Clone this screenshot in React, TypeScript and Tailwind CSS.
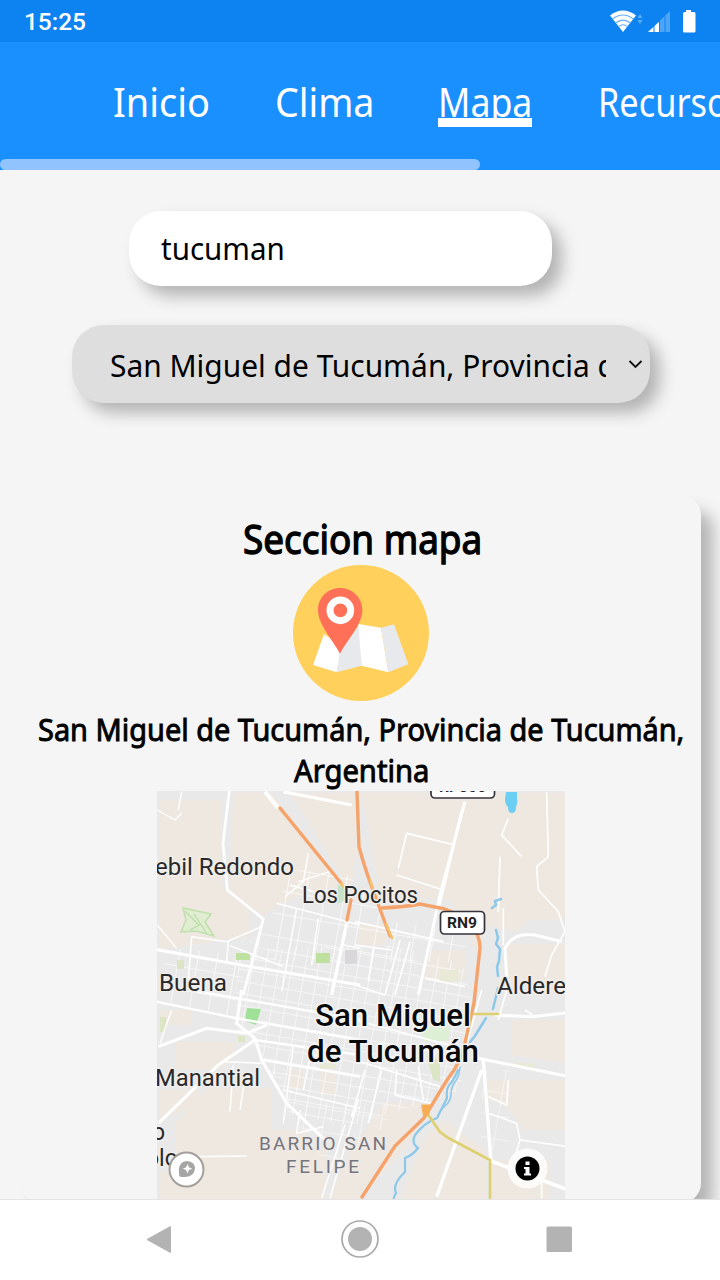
import { useLayoutEffect, useRef, useState } from "react";

function FitText({ text, width, className = "" }: { text: string; width: number; className?: string }) {
  const ref = useRef<HTMLSpanElement>(null);
  const [scale, setScale] = useState(1);
  useLayoutEffect(() => {
    if (ref.current) setScale(width / ref.current.offsetWidth);
  }, [text, width]);
  return (
    <span className={`block whitespace-nowrap ${className}`} style={{ width }}>
      <span ref={ref} className="inline-block origin-left" style={{ transform: `scaleX(${scale})` }}>
        {text}
      </span>
    </span>
  );
}

function StatusBar() {
  return (
    <div className="flex h-[42px] shrink-0 items-center justify-between bg-[#0c83f1] pl-[24px] pr-[24px] text-white">
      <FitText text="15:25" width={62} className="pt-px font-['Roboto',sans-serif] text-[24px] leading-[42px] font-medium" />
      <svg width="88" height="30" viewBox="608 5 88 30" className="-mt-px">
        <path d="M610 14.5 Q623 4.5 636 14.5 L623 31Z" fill="#fff" />
        <path d="M612.5 18 Q623 10 633.5 18 M615.5 22 Q623 16.3 630.5 22 M618.5 25.6 Q623 22 627.5 25.6" fill="none" stroke="#62aef7" strokeWidth="1.1" />
        <path d="M640 13l2.5 4h-5zM640 23l2.5-4h-5z" fill="#5aaef8" />
        <path d="M670 10V31H648Z" fill="#4ca5f6" />
        <path d="M659 21V31H648Z" fill="#fff" />
        <path d="M654 14v18M659.5 10v22M665 10v22" stroke="#0c83f1" strokeWidth="1" />
        <path d="M686 9h5v2h3q1.500 0 1.500 1.500V30q0 1.500-1.500 1.500H684.500Q683 31.500 683 30V12.500Q683 11 684.500 11H686Z" fill="#fff" />
      </svg>
    </div>
  );
}

function Header() {
  return (
    <header className="flex h-[128px] shrink-0 flex-col justify-between overflow-hidden bg-[#1a90ff]">
      <nav className="flex w-[800px] pt-[32px] pl-[113px] text-[39.5px] leading-[57px] text-white">
        <FitText text="Inicio" width={97} className="mr-[65px]" />
        <FitText text="Clima" width={99} className="mr-[64px]" />
        <div className="mr-[66px] h-[53px] overflow-hidden border-b-[9px] border-white">
          <FitText text="Mapa" width={94} />
        </div>
        <FitText text="Recursos" width={146} />
      </nav>
      <div className="h-[11px] w-[480px] rounded-md bg-[#91c3ff]" />
    </header>
  );
}

function MapBadge() {
  return (
    <svg className="h-[136px] w-[136px]" viewBox="219 225 408 408">
      <circle cx="423" cy="429" r="204" fill="#ffd05b" />
      <path d="M312 432L279 525L350 547L366 470Z" fill="#fff" />
      <path d="M360 480L350 547L425 527L420 402Z" fill="#e8e9ec" />
      <path d="M415 402L483 413L505 547L425 527Z" fill="#fff" />
      <path d="M483 413L522 403L565 523L505 547Z" fill="#e8e9ec" />
      <path d="M360 294c-37 0-66 29-66 66 0 43 44 89 66 131 22-42 67-88 67-131 0-37-30-66-67-66Z" fill="#ff7058" />
      <circle cx="361" cy="361" r="31" fill="none" stroke="#fff" strokeWidth="21" />
    </svg>
  );
}

function CityMap() {
  return (
    <svg className="h-[408px] w-[408px] font-['Roboto',sans-serif]" viewBox="157 791 408 408">
      <defs>
        <pattern id="grid" width="13" height="12" patternUnits="userSpaceOnUse" patternTransform="rotate(10)">
          <path d="M0 0H13M0 0V12" stroke="#fafafb" strokeWidth="1.5" />
        </pattern>
        <pattern id="gridWide" width="19" height="23" patternUnits="userSpaceOnUse" patternTransform="rotate(10)">
          <path d="M0 0H19M0 0V23" stroke="#fbfbfb" strokeWidth="1.7" />
        </pattern>
      </defs>
      <rect x="157" y="791" width="408" height="408" fill="#e9e9ea" />
      <g fill="#efe8e0">
        <path d="M160 800H222V884L250 905V936L160 950Z" />
        <path d="M233 793H272L345 885L300 895L262 915L230 890Z" />
        <path d="M290 793H356L358 850L350 890Z" />
        <path d="M362 793H565V920H530L515 932L490 925L475 950L450 900L380 895Z" />
        <path d="M507 944H565V982H507Z" />
        <path d="M360 925H385V945H358ZM430 950H465V980H425Z" />
        <path d="M160 1010H192V1025H160ZM176 1042H235V1055L222 1069H176ZM160 1090H200V1105L160 1120Z" />
        <path d="M176 1122L207 1088H272V1199H160V1172H176Z" />
        <path d="M288 1070H304V1088H288ZM320 1070H336V1095H320ZM272 1130H305V1150H325V1199H272Z" />
        <path d="M384 1103H420V1130L360 1199H330L345 1160Z" />
        <path d="M512 1020H565V1063L512 1055ZM512 1080H565V1130H525L500 1100H487V1080ZM425 1135L445 1120L485 1150V1199H400ZM492 1160H550V1199H492Z" />
      </g>
      <path d="M240 949L390 946L462 962L474 1010L460 1090L418 1105L350 1125L290 1115L260 1050L233 1025Z" fill="url(#grid)" />
      <path d="M292 870L345 872L400 925L468 930L462 962L240 960L270 920ZM165 948L245 955L240 1020L160 1000Z" fill="url(#gridWide)" />
      <path d="M265 1055L300 1100L400 1105L380 1130L330 1170L290 1115ZM483 1070H510V1150H480Z" fill="url(#gridWide)" opacity=".7" />
      <g>
        <path d="M183 908L211 914L205 922L214 936L196 931L181 932L186 920Z" fill="#e1edd0" stroke="#bfdfac" strokeWidth="1.500" />
        <path d="M185 911L199 925L190 930M194 914L207 934" fill="none" stroke="#b7dca6" strokeWidth="1.200" />
        <path d="M236 953h14v7h-14zM316 953h14v10h-14z" fill="#bfe1a0" />
        <path d="M247 1008L261 1009L256 1025L245 1021Z" fill="#9fe196" />
        <path d="M422 1026L450 1027L448 1041H423Z" fill="#ddefd4" />
        <path d="M426 1055L440 1060V1082L433 1079ZM238 1036h7v6h-7zM160 1017h6v15h-6zM177 960h7v9h-7z" fill="#dce6c5" />
        <path d="M320 1063h16v6h-16zM515 1063h20v5h-20zM440 970h18v12h-18z" fill="#e8ead5" />
        <path d="M345 950h12v14h-12z" fill="#d9d7d9" />
      </g>
      <g transform="translate(150 785) scale(.3333)" fill="none" stroke="#fff" strokeWidth="8">
        <path d="M238 18L219 175L232 315L340 402L280 630" />
        <path d="M345 20L385 70" strokeWidth="12" />
        <path d="M400 20L605 60M0 490L300 545L630 600" strokeWidth="9" />
        <path d="M592 405L545 630" strokeWidth="10" />
        <path d="M95 20L85 75M125 455L230 470L335 425M125 455L115 590M235 470L230 530M240 482L400 545M475 205L460 290L405 335M380 355L630 420M445 290L540 260M440 370L395 620M505 400L485 540M420 300L560 340M580 480L630 490" strokeWidth="4.500" />
        <path d="M22 75L75 105L95 85M22 420L80 490" strokeWidth="4" />
      </g>
      <g transform="translate(355 785) scale(.3333)" fill="none" stroke="#fff" strokeWidth="9">
        <path d="M330 50L255 330L190 630M320 80L250 370" />
        <path d="M575 22L580 215L545 245L550 315L610 380L630 440L590 510L570 575M130 250L155 145L300 180M125 270L265 315M0 410L265 470M0 480L110 495M55 490L40 590M135 465L90 630M165 470L120 630M0 600L90 630M210 580L330 605M460 100L440 150L500 215M435 215L430 380M445 370L445 480" strokeWidth="5" />
        <path d="M455 575L450 490Q475 440 540 450L620 470" />
      </g>
      <g transform="translate(150 990) scale(.3333)" fill="none" stroke="#fff" strokeWidth="9">
        <path d="M25 170L170 115L290 130L350 105M25 400L205 225L315 150" />
        <path d="M275 0L260 100L315 145L335 210L410 340L530 455" />
        <path d="M20 35L260 85L630 150M120 0L350 40L630 90M315 150L630 195M340 210L630 260" strokeWidth="7" />
        <path d="M400 300L630 355M225 215L335 220M250 225L240 365M285 260L270 360M430 170L400 400M480 200L460 300M110 500L290 498M625 330L540 625M585 405L515 625M450 360L440 430L520 410M65 60L30 160" strokeWidth="4.500" />
      </g>
      <g transform="translate(355 990) scale(.3333)" fill="none" stroke="#fff" strokeWidth="9">
        <path d="M420 75L530 80L640 68M370 205L645 260" />
        <path d="M380 240L245 620M385 210L408 515" strokeWidth="10" />
        <path d="M400 510L640 600" strokeWidth="11" />
        <path d="M0 210L255 290M30 240L-10 380M80 240L40 400M125 240L120 315L230 340M190 230L205 330M400 320L455 345L460 270M400 370L485 400L495 450L640 470M540 80L510 60M455 0L430 90M0 90L300 170M560 560L560 625M495 450L480 500M380 0L330 180" strokeWidth="5" />
      </g>
      <g fill="none" stroke="#8dc8e8" strokeLinecap="round">
        <path d="M506 792h11v7q1 4-1 8 0 6-4 6t-4-6q-3-3-3-8Z" fill="#6dcef3" stroke="none" />
        <path d="M492 908l4-3-1-4 6-2M496 930l2 8-2 6 4 5-1 12-2 6 1 9M498 988L493 1009M486 1018L475 1036L470 1042" strokeWidth="2.500" />
        <path d="M458 1070q-4 10-8 14t-3 14q-5 10-10 20q-13 5-22 17q-4 8 3 13q-5 7-13 10q0 8 0 14q-13 12-9 21q-3 5-2 7" strokeWidth="2.200" />
        <path d="M460 1067q-1 10-5 15t-4 12-6 12-7 11" strokeWidth="1.600" />
      </g>
      <g fill="none" strokeLinecap="round" strokeWidth="3.400">
        <path d="M280 808L341 883M351 900L347 920M357 792L359 847Q366 872 374 893L390 936M382 908Q405 907 420 904L445 909Q480 922 480 948L474 1003L466 1038Q463 1060 447 1080L424 1118L395 1146L362 1197" stroke="#f5a36b" />
        <path d="M370 880L373 890M386 924L392 938M341 883L344 888" stroke="#f5c069" strokeWidth="2.500" />
        <path d="M474 1014H498M427 1113L440 1132Q447 1138 456 1142L490 1160V1199" stroke="#ded06f" strokeWidth="2.600" />
        <path d="M422 1105h8l-1 9-5 3Z" fill="#f8ad50" stroke="#f8ad50" strokeWidth="1" />
      </g>
      <path d="M338 884L346 890V900L337 904Z" fill="#b4dfb9" opacity=".7" />
      <g fill="#292929" stroke="#f1eeeb" strokeWidth="3" paintOrder="stroke" strokeLinejoin="round" fontSize="23.500">
        <text x="155" y="875" textLength="139" lengthAdjust="spacingAndGlyphs">ebil Redondo</text>
        <text x="302" y="903" textLength="116" lengthAdjust="spacingAndGlyphs">Los Pocitos</text>
        <text x="159" y="990.500" textLength="68" lengthAdjust="spacingAndGlyphs">Buena</text>
        <text x="497" y="993.500" textLength="69" lengthAdjust="spacingAndGlyphs">Aldere</text>
        <text x="155" y="1085.500" textLength="105" lengthAdjust="spacingAndGlyphs">Manantial</text>
        <text x="152" y="1140" fontSize="23">o</text>
        <text x="146" y="1166" fontSize="23">olo</text>
      </g>
      <g fill="#080808" stroke="#f4f4f4" strokeWidth="3" paintOrder="stroke" strokeLinejoin="round" fontSize="31" fontWeight="500">
        <text x="315" y="1025.500" textLength="156" lengthAdjust="spacingAndGlyphs">San Miguel</text>
        <text x="307" y="1061.500" textLength="172" lengthAdjust="spacingAndGlyphs">de Tucumán</text>
      </g>
      <g fill="#74747d" stroke="#efeae6" strokeWidth="2" paintOrder="stroke" fontSize="19">
        <text x="259" y="1150" textLength="127">BARRIO SAN</text>
        <text x="286" y="1172.500" textLength="73">FELIPE</text>
      </g>
      <g fill="#fff" stroke="#33333b" strokeWidth="1.700">
        <rect x="440.500" y="911.500" width="44" height="22.500" rx="4" />
        <rect x="431" y="775" width="63.500" height="23" rx="4" />
      </g>
      <text x="447" y="928" fontSize="15.500" fontWeight="700" fill="#222" textLength="30" lengthAdjust="spacingAndGlyphs">RN9</text>
      <text x="439" y="792" fontSize="15.500" fontWeight="700" fill="#222" textLength="47" lengthAdjust="spacingAndGlyphs">RP306</text>
      <circle cx="186.500" cy="1169.500" r="17" fill="#fff" stroke="#a3a09b" strokeWidth="2" />
      <path d="M179.500 1176.500Q176.500 1162 187 1161Q195 1161.500 195 1169Q193 1179 179.500 1176.500Z" fill="#a5a5a3" />
      <path d="M187.500 1164l1.400 3.300 3.300 1.400-3.300 1.400-1.400 3.300-1.400-3.300-3.300-1.400 3.300-1.400Z" fill="#fff" />
      <circle cx="527.500" cy="1168.500" r="20" fill="#fff" fillOpacity=".8" />
      <circle cx="527.500" cy="1168.500" r="12" fill="#000" />
      <path d="M525.500 1161.500h4v3.500h-4zM524 1167h5.500v6.500h1.500v2h-7v-2h1.500v-4.500h-1.500Z" fill="#fff" />
    </svg>
  );
}

function MapSection() {
  return (
    <section className="mt-[92px] ml-[21px] flex h-[708px] w-[680px] shrink-0 flex-col items-center rounded-[20px] bg-[#f5f5f5] pt-[20px] text-black shadow-[14px_14px_16px_-2px_#b4b4b4]">
      <FitText text="Seccion mapa" width={239} className="h-[50px] pl-px text-[39.5px] leading-[49px] [-webkit-text-stroke:1.3px_#000]" />
      <MapBadge />
      <div className="flex h-[90px] flex-col items-center pt-[8px] text-[30.5px] leading-[41px] [-webkit-text-stroke:0.9px_#000]">
        <FitText text="San Miguel de Tucumán, Provincia de Tucumán," width={646} />
        <FitText text="Argentina" width={135} />
      </div>
      <CityMap />
    </section>
  );
}

function SystemNav() {
  return (
    <div className="flex h-[81px] shrink-0 items-center border-t border-[#e4e4e4] bg-white pl-[145px]">
      <svg width="428" height="40" viewBox="145 1219 428 40" className="-mt-[2px]" fill="#b3b3b3">
        <path d="M147 1239.500L170.500 1226.500V1252.500Z" stroke="#b3b3b3" strokeLinejoin="round" />
        <circle cx="360" cy="1239" r="12" />
        <circle cx="360" cy="1239" r="18" fill="none" stroke="#a9a9a9" strokeWidth="1.700" />
        <rect x="546.500" y="1226.500" width="25.500" height="25.500" rx="1.500" />
      </svg>
    </div>
  );
}

export default function App() {
  return (
    <div className="flex h-[1280px] w-[720px] flex-col overflow-hidden bg-[#f5f5f5] font-['Noto_Sans',sans-serif]">
      <StatusBar />
      <Header />
      <main className="flex min-h-0 flex-1 flex-col overflow-hidden pt-[41px] text-[30.5px] text-black">
        <div className="ml-[129px] flex h-[75px] w-[423px] shrink-0 items-center rounded-[32px] bg-white pl-[32px] shadow-[10px_10px_16px_#b4b4b4]">
          <FitText text="tucuman" width={124} />
        </div>
        <div className="mt-[39px] ml-[72px] flex h-[78px] w-[578px] shrink-0 items-center justify-between rounded-[32px] bg-[#dedede] pr-[7px] pl-[38px] shadow-[10px_10px_16px_#b4b4b4]">
          <div className="w-[496px] overflow-hidden pt-[3px]">
            <FitText text="San Miguel de Tucumán, Provincia de Tucumán," width={668} />
          </div>
          <svg width="15" height="10" viewBox="0 0 15 10" className="-mt-px">
            <path d="M1.500 2L7.500 8L13.500 2" fill="none" stroke="#111" strokeWidth="1.800" />
          </svg>
        </div>
        <MapSection />
      </main>
      <SystemNav />
    </div>
  );
}
